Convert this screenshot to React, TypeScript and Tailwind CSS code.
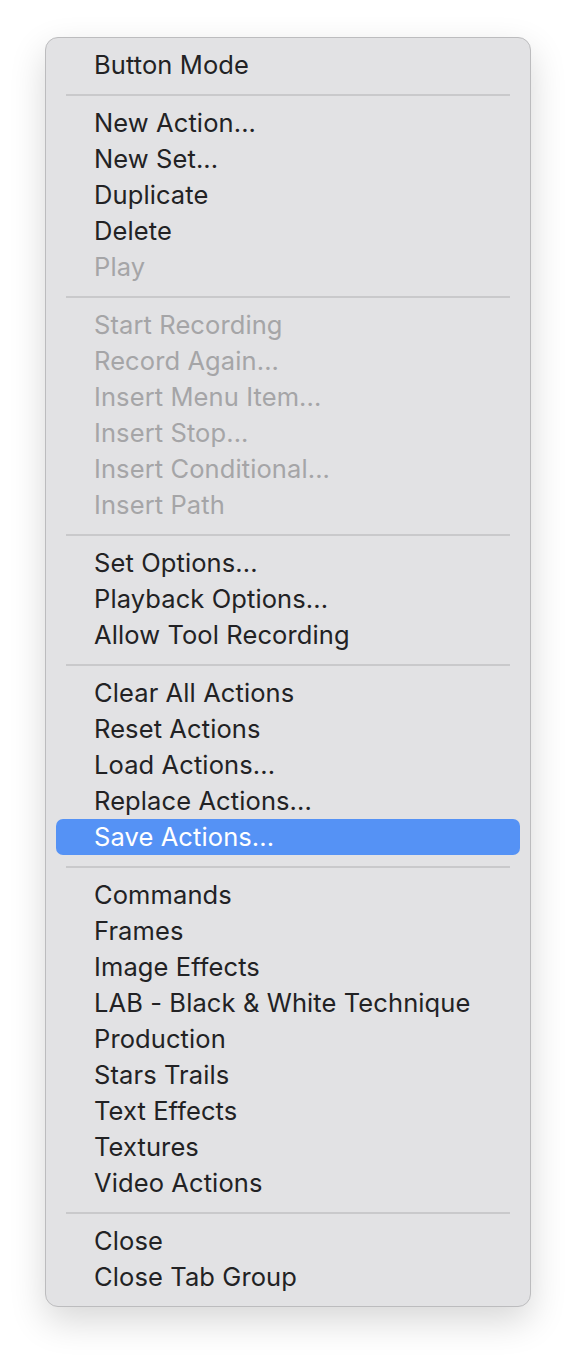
type Entry = { label: string; disabled?: boolean; active?: boolean } | "sep"

const entries: Entry[] = [
  { label: "Button Mode" },
  "sep",
  { label: "New Action..." },
  { label: "New Set..." },
  { label: "Duplicate" },
  { label: "Delete" },
  { label: "Play", disabled: true },
  "sep",
  { label: "Start Recording", disabled: true },
  { label: "Record Again...", disabled: true },
  { label: "Insert Menu Item...", disabled: true },
  { label: "Insert Stop...", disabled: true },
  { label: "Insert Conditional...", disabled: true },
  { label: "Insert Path", disabled: true },
  "sep",
  { label: "Set Options..." },
  { label: "Playback Options..." },
  { label: "Allow Tool Recording" },
  "sep",
  { label: "Clear All Actions" },
  { label: "Reset Actions" },
  { label: "Load Actions..." },
  { label: "Replace Actions..." },
  { label: "Save Actions...", active: true },
  "sep",
  { label: "Commands" },
  { label: "Frames" },
  { label: "Image Effects" },
  { label: "LAB - Black & White Technique" },
  { label: "Production" },
  { label: "Stars Trails" },
  { label: "Text Effects" },
  { label: "Textures" },
  { label: "Video Actions" },
  "sep",
  { label: "Close" },
  { label: "Close Tab Group" },
]

export default function App() {
  return (
    <div className="min-h-[1360px] w-[576px] bg-white pl-[45px] pt-[37px]">
      <div
        className="flex w-[486px] flex-col rounded-[13px] border border-[#bcbcbe] bg-[#e2e2e4] px-[10px] pt-[9px] pb-[11px] shadow-[0_14px_36px_rgba(0,0,0,0.16)]"
        style={{ fontFamily: "Inter, 'Noto Sans', sans-serif" }}
      >
        {entries.map((e, i) =>
          e === "sep" ? (
            <div key={i} className="flex h-[22px] items-center px-[10px] pt-[1px]">
              <div className="h-[2px] w-full bg-[#c9c9cb]" />
            </div>
          ) : (
            <div
              key={i}
              className={
                e.active
                  ? "flex h-[36px] items-center rounded-[7px] bg-[#5592f5] pl-[38px] text-[25.5px] leading-none tracking-[0.1px] text-white"
                  : e.disabled
                    ? "flex h-[36px] items-center pl-[38px] text-[25.5px] leading-none tracking-[0.1px] text-[#a5a5a7]"
                    : "flex h-[36px] items-center pl-[38px] text-[25.5px] leading-none tracking-[0.1px] text-[#222224]"
              }
            >
              {e.label}
            </div>
          ),
        )}
      </div>
    </div>
  )
}
